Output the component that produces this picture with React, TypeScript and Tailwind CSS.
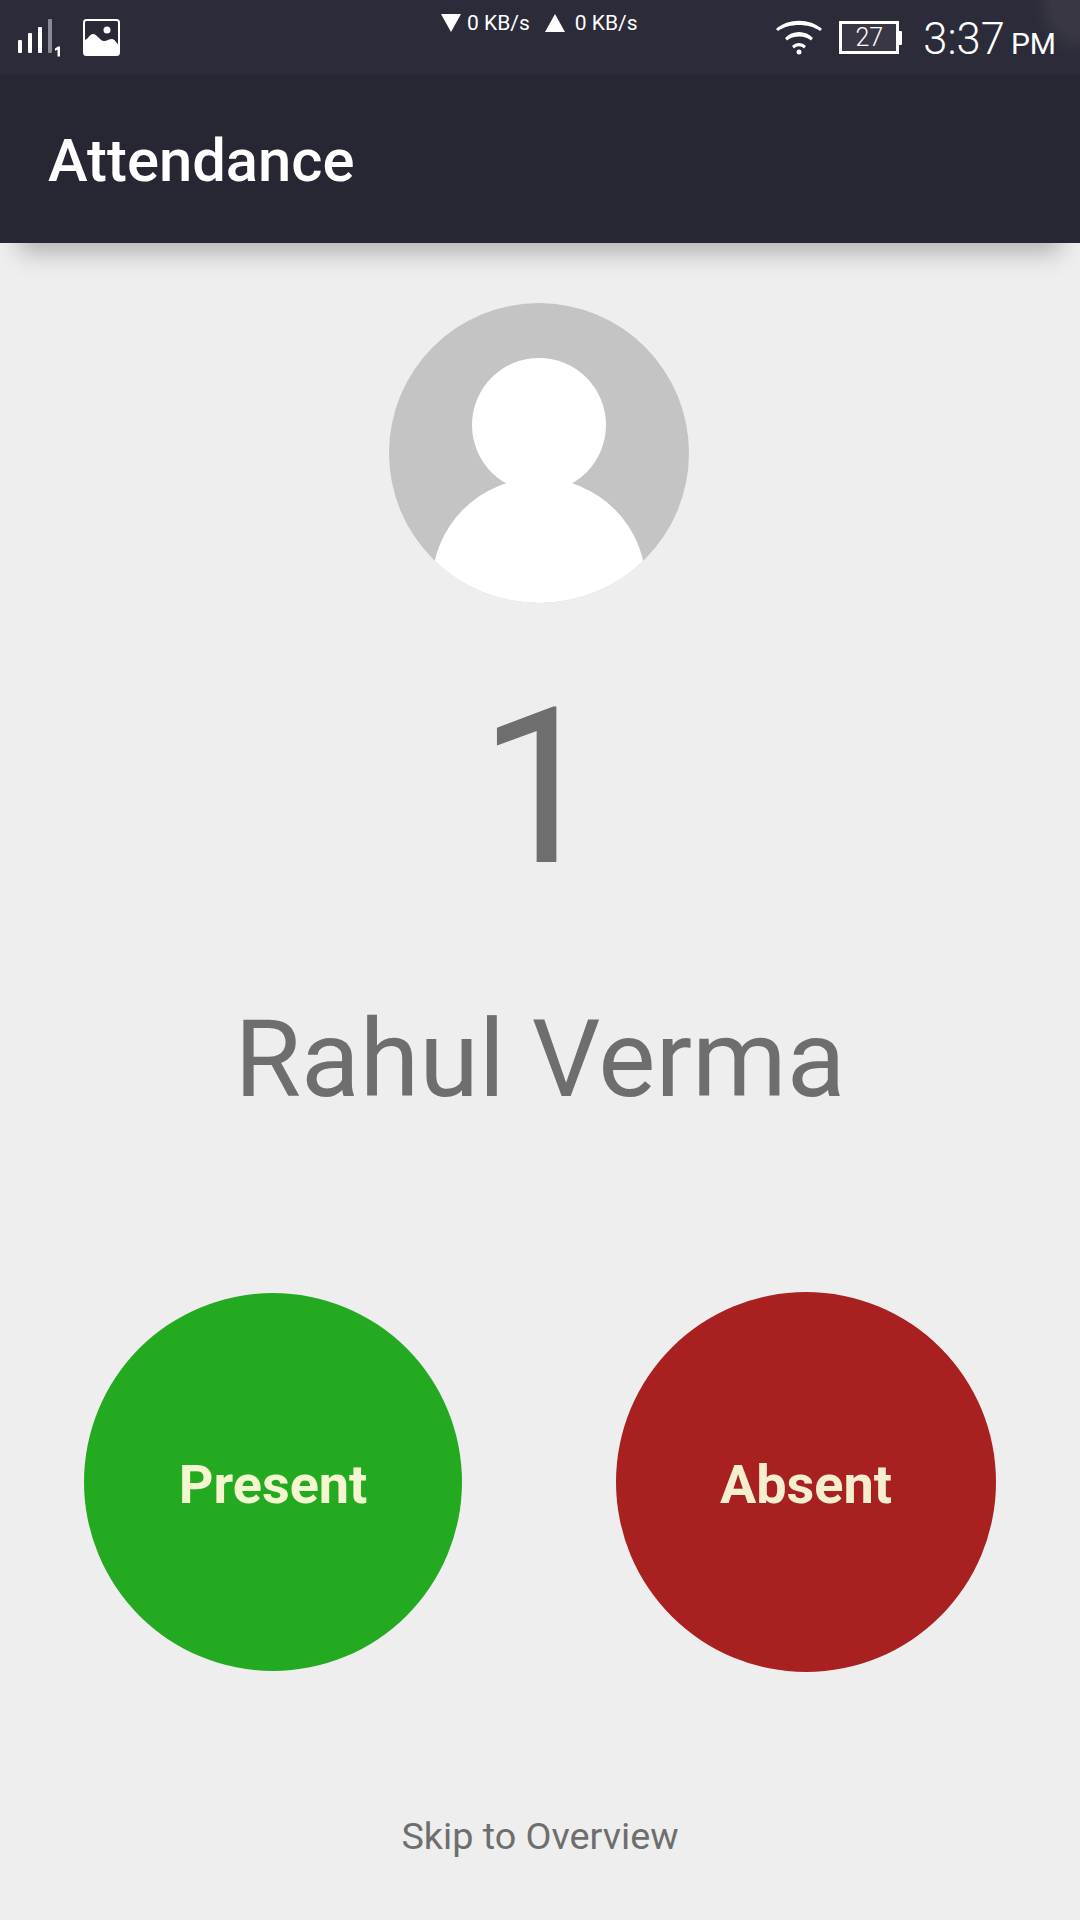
import React from 'react';

const font = { fontFamily: 'Roboto, sans-serif' };

const SignalIcon = () => (
  <svg width="46" height="38" viewBox="0 0 46 38" className="mt-[19px] ml-[18px]">
    <rect x="0" y="21" width="4" height="13" rx="1" fill="#fff" />
    <rect x="10" y="14" width="4" height="20" rx="1" fill="#fff" />
    <rect x="20" y="8" width="4" height="26" rx="1" fill="#fff" />
    <rect x="30" y="0" width="4" height="34" rx="1" fill="#8a8a94" />
    <path d="M37 29.500l3-2h2v10h-2.500v-6.700l-2.500 1z" fill="#fff" />
  </svg>
);

const PictureIcon = () => (
  <svg width="37" height="37" viewBox="0 0 37 37" className="mt-[19px] ml-[19px]">
    <rect x="1" y="1" width="35" height="35" rx="2.500" fill="#292937" stroke="#fff" strokeWidth="2" />
    <path d="M2 21 C6 19 7 15 10 15 C14 15 17 22 21 22 C24 22 26 20 29 20 C32 20 33 24 35 25 V35 H2 Z" fill="#fff" />
    <circle cx="24" cy="11" r="3.500" fill="#fff" />
  </svg>
);

const WifiIcon = () => (
  <svg width="46" height="35" viewBox="0 0 46 35" className="mt-[20px]" fill="#fff">
    <path d="M0 9 C12 -2 34 -2 46 9 L44 11 C33 3 13 3 2 11 Z" />
    <path d="M9 18 C16 10 30 10 37 18 L35 20.500 C29 15 17 15 11 20.500 Z" />
    <path d="M16 26 C20 22 26 22 30 26 L28 28.500 C25 25.500 21 25.500 18 28.500 Z" />
    <circle cx="23" cy="32" r="2.500" />
  </svg>
);

const Battery = () => (
  <div className="flex items-center mt-[21px] ml-[17px] h-[33px]">
    <div className="w-[60px] h-[33px] border-[3px] border-white bg-[#393646] flex items-center justify-center text-white text-[25px] leading-none font-light">
      27
    </div>
    <div className="w-[3px] h-[14px] bg-white rounded-r-[1px]" />
  </div>
);

const Avatar = () => (
  <div className="w-[300px] h-[300px] rounded-full overflow-hidden mr-[2px]">
    <svg width="300" height="300" viewBox="0 0 300 300">
      <rect width="300" height="300" fill="#c4c4c4" />
      <circle cx="150" cy="122" r="67" fill="#fff" />
      <circle cx="150" cy="282" r="107" fill="#fff" />
    </svg>
  </div>
);

export default function App() {
  return (
    <div className="relative w-[1080px] h-[1920px] bg-[#eeeeee] overflow-hidden flex flex-col" style={font}>
      {/* Status bar */}
      <div className="relative h-[75px] bg-[#2b2b39] flex items-start text-white shrink-0">
        {/* lighter corner of the screen */}
        <div className="absolute top-0 right-0 w-[50px] h-[60px] bg-[radial-gradient(ellipse_at_100%_0%,#383743_0%,#383743_40%,transparent_68%)]" />
        <SignalIcon />
        <PictureIcon />
        <div className="flex items-center ml-[321px] mt-[10px] text-[21px] leading-[26px] font-normal">
          <svg width="20" height="18" viewBox="0 0 20 18"><path d="M0 0h20L10 18z" fill="#fff" /></svg>
          <span className="ml-[6px]">0 KB/s</span>
          <svg width="20" height="18" viewBox="0 0 20 18" className="ml-[15px]"><path d="M0 18h20L10 0z" fill="#fff" /></svg>
          <span className="ml-[10px]">0 KB/s</span>
        </div>
        <div className="relative ml-auto flex items-start pr-[24px]">
          <WifiIcon />
          <Battery />
          <div className="ml-[21px] mt-[16px] flex items-baseline leading-[48px]">
            <span className="text-[43.5px] font-light">3:37</span>
            <span className="text-[30px] ml-[6px] font-normal">PM</span>
          </div>
        </div>
      </div>

      {/* Toolbar */}
      <div className="h-[168px] bg-[#272733] flex items-center pl-[48px] pt-[5px] shadow-[0_30px_22px_-20px_rgba(0,0,0,0.25)] shrink-0 z-10">
        <span className="text-white text-[59.75px] font-medium leading-none">Attendance</span>
      </div>

      {/* Student */}
      <div className="flex flex-col items-center pt-[60px]">
        <Avatar />
        <div className="text-[#6e6e6e] text-[218px] leading-[218px] font-normal mt-[76px]">1</div>
        <div className="text-[#6e6e6e] text-[108px] leading-[108px] mt-[108px]">Rahul Verma</div>
      </div>

      {/* Actions */}
      <div className="flex justify-between items-center pl-[84px] pr-[84px] mt-[179px]">
        <button className="w-[378px] h-[378px] rounded-full bg-[#23aa20] text-[#f3f6cf] text-[54px] font-bold pt-[4px]">
          Present
        </button>
        <button className="w-[380px] h-[380px] rounded-full bg-[#a82020] text-[#f6efcf] text-[54px] font-bold pt-[4px]">
          Absent
        </button>
      </div>

      <div className="text-center text-[#6e6e6e] text-[37.75px] mt-[136px]">Skip to Overview</div>
    </div>
  );
}
